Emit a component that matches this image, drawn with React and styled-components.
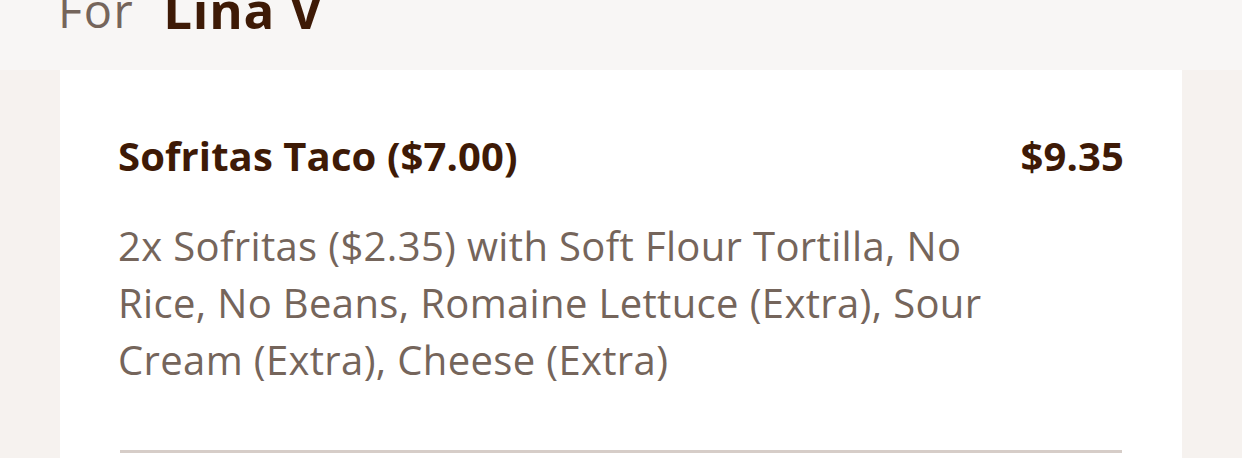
import React from 'react'
import styled, { createGlobalStyle } from 'styled-components'

const GlobalStyle = createGlobalStyle`
  html, body {
    margin: 0;
    padding: 0;
    background: #f6f2ef;
    font-family: 'Open Sans', 'Noto Sans', sans-serif;
    font-variant-ligatures: none;
    overflow: hidden;
  }
`

const item = {
  name: 'Sofritas Taco ($7.00)',
  price: '$9.35',
  details:
    '2x Sofritas ($2.35) with Soft Flour Tortilla, No Rice, No Beans, Romaine Lettuce (Extra), Sour Cream (Extra), Cheese (Extra)',
}

function App() {
  return (
    <>
      <GlobalStyle />
      <Header>
        <Label>For</Label>
        <Name>Lina V</Name>
      </Header>
      <Card>
        <TopRow>
          <Title>{item.name}</Title>
          <Price>{item.price}</Price>
        </TopRow>
        <Details>{item.details}</Details>
        <Divider />
      </Card>
    </>
  )
}

export default App

const Header = styled.div`
  height: 70px;
  background: #f8f6f5;
  display: flex;
  align-items: flex-end;
  gap: 29px;
  padding: 0 58px;
  overflow: hidden;
  box-sizing: border-box;
`

const Label = styled.span`
  font-size: 47px;
  line-height: 1;
  color: #75655b;
  letter-spacing: 1.5px;
  margin-bottom: 36px;
`

const Name = styled.span`
  font-size: 51px;
  line-height: 1;
  font-weight: 700;
  color: #3e1a06;
  letter-spacing: 0.8px;
  margin-bottom: 35px;
`

const Card = styled.div`
  background: #fff;
  margin: 0 60px;
  padding: 60px 58px 40px 58px;
`

const TopRow = styled.div`
  display: flex;
  justify-content: space-between;
  align-items: baseline;
`

const Title = styled.div`
  font-size: 40px;
  font-weight: 700;
  color: #3e1a06;
  line-height: 52px;
  letter-spacing: 0.1px;
`

const Price = styled(Title)``

const Details = styled.p`
  margin: 35px 0 0 0;
  max-width: 900px;
  font-size: 40px;
  line-height: 57px;
  color: #75655b;
  letter-spacing: 0.35px;
`

const Divider = styled.div`
  height: 3px;
  background: #d6cdc8;
  margin: 62px 2px 0 2px;
`
